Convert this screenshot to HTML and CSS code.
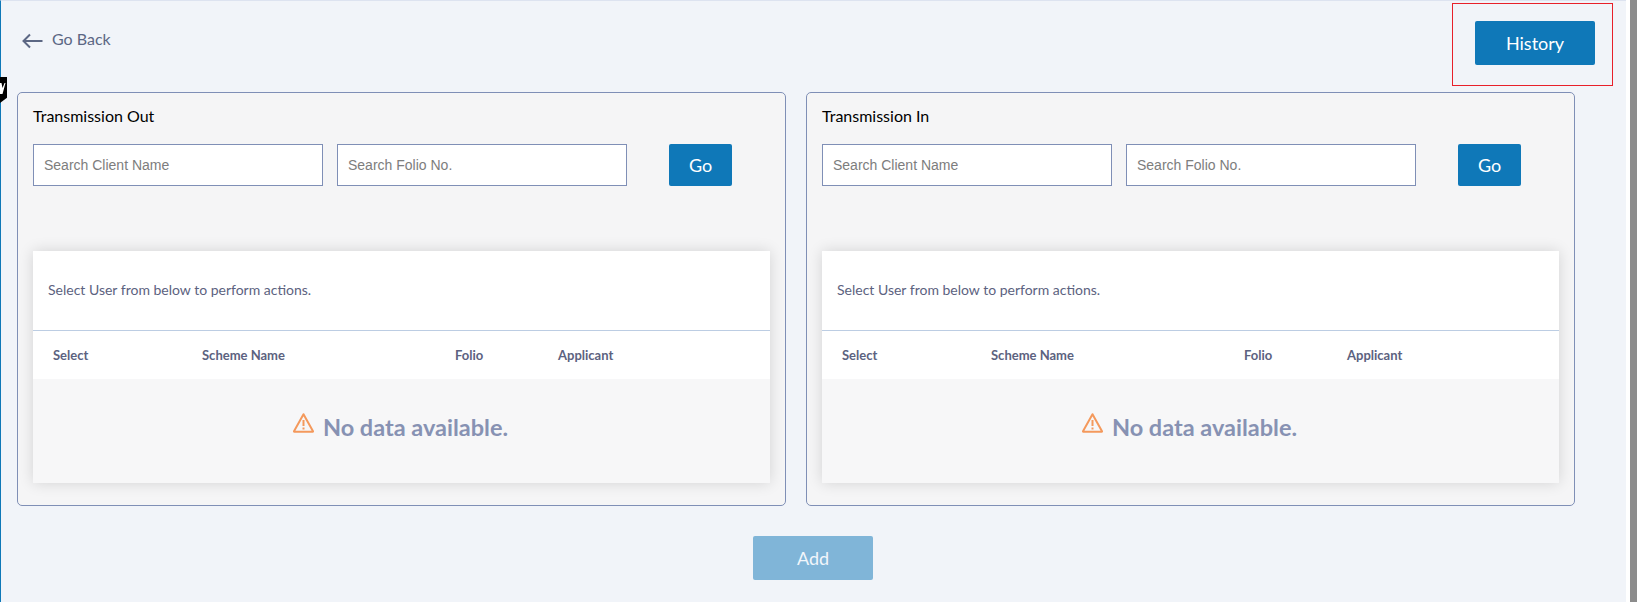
FILE: index.html
```html
<!DOCTYPE html>
<html lang="en">
<head>
<meta charset="utf-8">
<title>Transmission</title>
<link rel="stylesheet" href="styles.css">
</head>
<body>
<div class="page">
  <div class="tag"><svg class="tag-mark" width="7" height="26" viewBox="0 0 7 26"><path d="M0 6h1.500L2.500 11l2-5H5.500L2.500 17H0Z" fill="#fff"/></svg></div>
  <header class="topbar">
    <a class="back">
      <svg class="back-icon" width="21" height="16" viewBox="0 0 21 16"><path d="M20.500 8H1.500M8 1.500 1.500 8 8 14.500" fill="none" stroke="#5c6784" stroke-width="2"/></svg>
      <span>Go Back</span>
    </a>
    <div class="history-box"><button class="btn btn-history">History</button></div>
  </header>
  <main class="panels">
    <section class="panel">
      <h2 class="panel-title">Transmission Out</h2>
      <div class="search-row">
        <input class="search" placeholder="Search Client Name">
        <input class="search" placeholder="Search Folio No.">
        <button class="btn btn-go">Go</button>
      </div>
      <div class="card">
        <p class="card-note">Select User from below to perform actions.</p>
        <div class="thead">
          <span class="th th-select">Select</span>
          <span class="th th-scheme">Scheme Name</span>
          <span class="th th-folio">Folio</span>
          <span class="th">Applicant</span>
        </div>
        <div class="empty">
          <svg class="warn" width="21" height="20" viewBox="0 0 21 20"><path d="M10.500 1.200 20 18.200a.4.4 0 0 1-.3.6H1.300a.4.4 0 0 1-.3-.6Z" fill="none" stroke="#f4995c" stroke-width="2" stroke-linejoin="round"/><path d="M10.500 7v6M10.500 14.500v2" stroke="#f4995c" stroke-width="2"/></svg>
          <span>No data available.</span>
        </div>
      </div>
    </section>
    <section class="panel">
      <h2 class="panel-title">Transmission In</h2>
      <div class="search-row">
        <input class="search" placeholder="Search Client Name">
        <input class="search" placeholder="Search Folio No.">
        <button class="btn btn-go">Go</button>
      </div>
      <div class="card">
        <p class="card-note">Select User from below to perform actions.</p>
        <div class="thead">
          <span class="th th-select">Select</span>
          <span class="th th-scheme">Scheme Name</span>
          <span class="th th-folio">Folio</span>
          <span class="th">Applicant</span>
        </div>
        <div class="empty">
          <svg class="warn" width="21" height="20" viewBox="0 0 21 20"><path d="M10.500 1.200 20 18.200a.4.4 0 0 1-.3.6H1.300a.4.4 0 0 1-.3-.6Z" fill="none" stroke="#f4995c" stroke-width="2" stroke-linejoin="round"/><path d="M10.500 7v6M10.500 14.500v2" stroke="#f4995c" stroke-width="2"/></svg>
          <span>No data available.</span>
        </div>
      </div>
    </section>
  </main>
  <div class="actions"><button class="btn btn-add">Add</button></div>
</div>
<div class="scroll-gap"></div>
<div class="scrollbar"></div>
</body>
</html>
```
FILE: styles.css
```css
* { box-sizing: border-box; }
html, body { margin: 0; height: 602px; overflow: hidden; }
body { display: flex; background: #fff; font-family: Lato, "Liberation Sans", sans-serif; }
.page {
  position: relative;
  width: 1626px;
  height: 602px;
  background: #f1f4f9;
  border-left: 1px solid #0f78b8;
  border-top: 1px solid #dde3f0;
}
.scroll-gap { width: 4px; background: #fff; }
.scrollbar { width: 7px; background: #8c8c8c; }
.tag {
  position: absolute;
  left: -1px;
  top: 76px;
  width: 7px;
  height: 26px;
  background: #000;
  clip-path: polygon(0 0, 100% 0, 100% 80%, 0 100%);
  overflow: hidden;
}
.tag-mark { display: block; }
.topbar {
  display: flex;
  justify-content: space-between;
  height: 91px;
  padding: 2px 13px 0 21px;
}
.back {
  display: flex;
  align-items: center;
  gap: 9px;
  height: 22px;
  margin-top: 24px;
  color: #5c6784;
  font-size: 16px;
}
.back-icon { margin-top: 6px; }
.history-box {
  width: 161px;
  height: 83px;
  border: 1px solid #e8202a;
  padding: 17px 0 0 22px;
}
.btn {
  border: 0;
  border-radius: 2px;
  background: #0f78b8;
  color: #fff;
  font-family: Lato, "Liberation Sans", sans-serif;
  font-size: 18px;
  padding: 0;
}
.btn-history, .btn-add { width: 120px; height: 44px; }
.panels {
  display: flex;
  gap: 20px;
  padding-left: 16px;
}
.panel {
  width: 769px;
  height: 414px;
  background: #f5f5f6;
  border: 1px solid #7f8fb6;
  border-radius: 5px;
  padding: 0 15px;
}
.panel-title {
  margin: 11px 0 0;
  height: 23px;
  font-size: 16px;
  line-height: 23px;
  font-weight: 400;
  color: #000;
}
.search-row {
  display: flex;
  margin-top: 17px;
}
.search {
  width: 290px;
  height: 42px;
  margin-right: 14px;
  padding: 0 10px;
  border: 1px solid #7f8fb6;
  border-radius: 0;
  background: #fff;
  font-family: "Liberation Sans", Arial, sans-serif;
  font-size: 14px;
}
.search::placeholder { color: #7d7d7d; opacity: 1; }
.btn-go { width: 63px; height: 42px; margin-left: 28px; }
.card {
  width: 737px;
  height: 232px;
  margin-top: 65px;
  background: #fff;
  box-shadow: 0 0 14px rgba(0, 0, 0, .14);
}
.card-note {
  margin: 0;
  height: 80px;
  padding: 30px 0 0 15px;
  font-size: 14px;
  line-height: 18px;
  color: #5c6280;
  border-bottom: 1px solid #bccde3;
}
.thead {
  display: flex;
  align-items: center;
  height: 48px;
  padding-left: 20px;
}
.th { font-size: 13px; font-weight: 700; color: #5c6280; }
.th-select { width: 149px; }
.th-scheme { width: 253px; }
.th-folio { width: 103px; }
.empty {
  display: flex;
  align-items: center;
  justify-content: center;
  gap: 9px;
  height: 104px;
  padding: 0 2px 8px 0;
  background: #f7f7f8;
  color: #8792b3;
  font-size: 23.500px;
  font-weight: 700;
}
.warn { margin-top: -8px; }
.actions {
  display: flex;
  padding: 30px 0 0 752px;
}
.btn-add { background: #80b5d8; color: #f1f6fb; }
```
